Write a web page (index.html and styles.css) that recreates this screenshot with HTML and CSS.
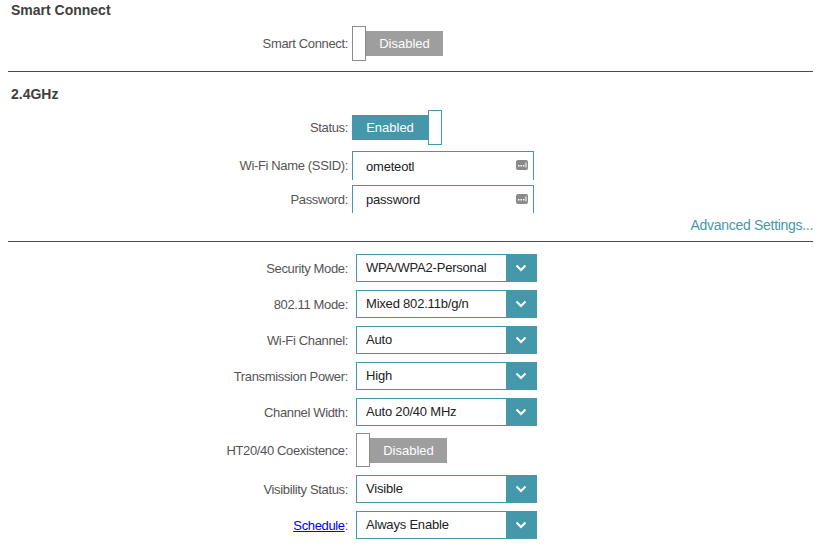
FILE: index.html
```html
<!DOCTYPE html>
<html lang="en">
<head>
    <meta charset="UTF-8">
    <meta name="viewport" content="width=device-width, initial-scale=1.0">
    <title>Wireless Settings</title>
    <link rel="stylesheet" href="styles.css">
</head>
<body>
    <div class="page">
        <!-- Smart Connect -->
        <h2 class="section-title">Smart Connect</h2>
        <div class="row row-first">
            <label class="row-label">Smart Connect:</label>
            <div class="toggle off">
                <span class="knob"></span>
                <span class="bar">Disabled</span>
            </div>
        </div>
        <hr class="divider">

        <!-- 2.4GHz -->
        <h2 class="section-title title-gap">2.4GHz</h2>
        <div class="row row-first">
            <label class="row-label">Status:</label>
            <div class="toggle on">
                <span class="bar">Enabled</span>
                <span class="knob"></span>
            </div>
        </div>
        <div class="row row-ssid">
            <label class="row-label" for="ssid">Wi-Fi Name (SSID):</label>
            <div class="field">
                <input type="text" id="ssid" value="ometeotl">
                <svg class="field-icon" width="12" height="10" viewBox="0 0 12 10">
                    <rect x="0" y="0" width="12" height="10" rx="2" fill="#8a8a8a"/>
                    <rect x="2" y="5" width="1.5" height="1.5" fill="#fff"/>
                    <rect x="4.5" y="5" width="1.5" height="1.5" fill="#fff"/>
                    <rect x="7" y="5" width="1.5" height="1.5" fill="#fff"/>
                    <rect x="9.5" y="2.5" width="1" height="5" fill="#fff"/>
                </svg>
            </div>
        </div>
        <div class="row row-pass">
            <label class="row-label" for="password">Password:</label>
            <div class="field">
                <input type="text" id="password" value="password">
                <svg class="field-icon" width="12" height="10" viewBox="0 0 12 10">
                    <rect x="0" y="0" width="12" height="10" rx="2" fill="#8a8a8a"/>
                    <rect x="2" y="5" width="1.5" height="1.5" fill="#fff"/>
                    <rect x="4.5" y="5" width="1.5" height="1.5" fill="#fff"/>
                    <rect x="7" y="5" width="1.5" height="1.5" fill="#fff"/>
                    <rect x="9.5" y="2.5" width="1" height="5" fill="#fff"/>
                </svg>
            </div>
        </div>
        <div class="advanced">
            <a href="#" class="advanced-link">Advanced Settings...</a>
        </div>
        <hr class="divider divider-second">

        <!-- Advanced -->
        <div class="select-list">
            <div class="row">
                <label class="row-label">Security Mode:</label>
                <div class="select"><span class="select-text">WPA/WPA2-Personal</span><span class="select-arrow"><svg width="12" height="8" viewBox="0 0 12 8"><path d="M1.5 1.5 L6 6 L10.5 1.5" fill="none" stroke="#fff" stroke-width="2"/></svg></span></div>
            </div>
            <div class="row">
                <label class="row-label">802.11 Mode:</label>
                <div class="select"><span class="select-text">Mixed 802.11b/g/n</span><span class="select-arrow"><svg width="12" height="8" viewBox="0 0 12 8"><path d="M1.5 1.5 L6 6 L10.5 1.5" fill="none" stroke="#fff" stroke-width="2"/></svg></span></div>
            </div>
            <div class="row">
                <label class="row-label">Wi-Fi Channel:</label>
                <div class="select"><span class="select-text">Auto</span><span class="select-arrow"><svg width="12" height="8" viewBox="0 0 12 8"><path d="M1.5 1.5 L6 6 L10.5 1.5" fill="none" stroke="#fff" stroke-width="2"/></svg></span></div>
            </div>
            <div class="row">
                <label class="row-label">Transmission Power:</label>
                <div class="select"><span class="select-text">High</span><span class="select-arrow"><svg width="12" height="8" viewBox="0 0 12 8"><path d="M1.5 1.5 L6 6 L10.5 1.5" fill="none" stroke="#fff" stroke-width="2"/></svg></span></div>
            </div>
            <div class="row">
                <label class="row-label">Channel Width:</label>
                <div class="select"><span class="select-text">Auto 20/40 MHz</span><span class="select-arrow"><svg width="12" height="8" viewBox="0 0 12 8"><path d="M1.5 1.5 L6 6 L10.5 1.5" fill="none" stroke="#fff" stroke-width="2"/></svg></span></div>
            </div>
            <div class="row row-ht">
                <label class="row-label">HT20/40 Coexistence:</label>
                <div class="toggle off toggle-inset">
                    <span class="knob"></span>
                    <span class="bar">Disabled</span>
                </div>
            </div>
            <div class="row">
                <label class="row-label">Visibility Status:</label>
                <div class="select"><span class="select-text">Visible</span><span class="select-arrow"><svg width="12" height="8" viewBox="0 0 12 8"><path d="M1.5 1.5 L6 6 L10.5 1.5" fill="none" stroke="#fff" stroke-width="2"/></svg></span></div>
            </div>
            <div class="row">
                <label class="row-label"><a href="#" class="schedule-link">Schedule</a>:</label>
                <div class="select"><span class="select-text">Always Enable</span><span class="select-arrow"><svg width="12" height="8" viewBox="0 0 12 8"><path d="M1.5 1.5 L6 6 L10.5 1.5" fill="none" stroke="#fff" stroke-width="2"/></svg></span></div>
            </div>
        </div>
    </div>
</body>
</html>
```
FILE: styles.css
```css
/* General Styles */
body {
    font-family: 'Liberation Sans', Arial, sans-serif;
    margin: 0;
    padding: 0;
    background-color: #fff;
    color: #555;
    font-size: 13px;
}

.page {
    width: 805px;
    margin-left: 8px;
}

.section-title {
    margin: 0;
    padding-left: 3px;
    font-size: 14px;
    font-weight: bold;
    line-height: 20px;
    color: #404040;
}

.title-gap {
    margin-top: 12px;
}

.divider {
    border: none;
    border-top: 1px solid #4a4a4a;
    margin: 10px 0 0;
    height: 0;
}

.divider-second {
    margin-top: 7px;
}

/* Rows */
.row {
    display: flex;
    align-items: center;
    margin-top: 8px;
}

.row-first {
    margin-top: 6px;
}

.row-ssid {
    margin-top: 6px;
}

.row-pass {
    margin-top: 5px;
}

.row-ht {
    margin-top: 7px;
}

.row-label {
    width: 344px;
    padding-right: 4px;
    box-sizing: border-box;
    text-align: right;
    letter-spacing: -0.35px;
    flex-shrink: 0;
}

.schedule-link {
    color: #0000ee;
    text-decoration: underline;
}

/* Toggles */
.toggle {
    display: flex;
    align-items: center;
}

.toggle-inset {
    margin-left: 4px;
}

.knob {
    width: 14px;
    height: 35px;
    box-sizing: border-box;
    border: 1px solid #8c8c8c;
    background: #fff;
}

.toggle-inset .knob {
    height: 34px;
}

.bar {
    width: 77px;
    height: 25px;
    line-height: 25px;
    text-align: center;
    color: #fff;
    font-size: 13px;
}

.toggle.off .bar {
    background-color: #9e9e9e;
}

.toggle.on .bar {
    background-color: #4598aa;
    width: 76px;
}

.toggle.on .knob {
    border-color: #4598aa;
}

/* Text fields */
.field {
    position: relative;
    width: 182px;
    height: 29px;
    box-sizing: border-box;
    border: 1px solid #4598aa;
    border-bottom: none;
}

.row-pass .field {
    height: 28px;
}

.field input {
    width: 100%;
    height: 100%;
    box-sizing: border-box;
    border: none;
    outline: none;
    padding: 0 0 0 13px;
    font-family: 'Liberation Sans', Arial, sans-serif;
    font-size: 13px;
    letter-spacing: -0.2px;
    color: #222;
    background: transparent;
}

.field-icon {
    position: absolute;
    right: 5px;
    top: 8px;
}

.advanced {
    text-align: right;
    margin-top: 4px;
    line-height: 16px;
}

.advanced-link {
    color: #4598aa;
    font-size: 14px;
    text-decoration: none;
    letter-spacing: -0.3px;
}

/* Selects */
.select-list {
    padding-top: 4px;
}

.select {
    display: flex;
    margin-left: 4px;
    width: 181px;
    height: 28px;
    box-sizing: border-box;
    border: 1px solid #4598aa;
    background: #fff;
}

.select-text {
    flex: 1;
    padding-left: 9px;
    line-height: 26px;
    color: #222;
    letter-spacing: -0.2px;
}

.select-arrow {
    width: 30px;
    background-color: #4598aa;
    display: flex;
    align-items: center;
    justify-content: center;
}
```
